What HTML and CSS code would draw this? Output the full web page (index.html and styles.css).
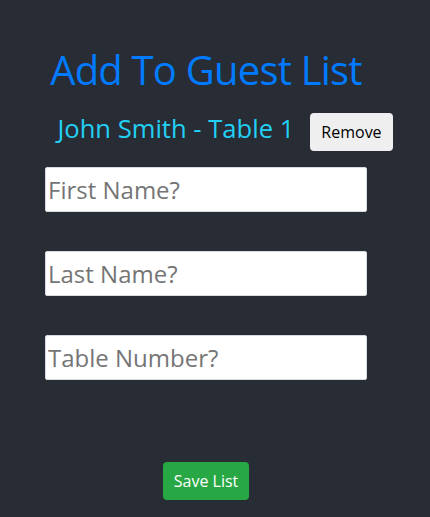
FILE: index.html
```html
<!DOCTYPE html>
<html lang="en">
<head>
<meta charset="utf-8">
<title>Add To Guest List</title>
<link rel="stylesheet" href="styles.css">
</head>
<body>
<div class="app">
  <h1 class="title">Add To Guest List</h1>
  <div class="guest-row">
    <span class="guest-name">John Smith - Table 1</span>
    <button class="btn btn-light" type="button">Remove</button>
  </div>
  <form class="guest-form">
    <input class="field" type="text" placeholder="First Name?">
    <input class="field" type="text" placeholder="Last Name?">
    <input class="field" type="text" placeholder="Table Number?">
  </form>
  <div class="actions">
    <button class="btn btn-success" type="button">Save List</button>
  </div>
</div>
</body>
</html>
```

FILE: styles.css
```css
html, body {
  margin: 0;
  padding: 0;
  background: #282c34;
  height: 100%;
}
body {
  font-family: "Open Sans", "Noto Sans", sans-serif;
  overflow: hidden;
}
.app {
  width: 412px;
  display: flex;
  flex-direction: column;
  align-items: center;
}
.title {
  margin: 46px 0 0;
  font-size: 40px;
  font-weight: 400;
  line-height: 1.2;
  letter-spacing: -0.8px;
  color: #007bff;
}
.guest-row {
  display: flex;
  align-items: baseline;
  gap: 16px;
  margin-top: 17px;
  padding-left: 38px;
}
.guest-name {
  font-size: 25.6px;
  color: #22d0f5;
}
.btn {
  font-family: inherit;
  font-size: 16px;
  line-height: 1.5;
  padding: 6px 10px;
  border: 1px solid transparent;
  border-radius: 4px;
  cursor: pointer;
}
.btn-light {
  background: #efefef;
  color: #000;
}
.btn-success {
  background: #28a745;
  color: #fff;
}
.guest-form {
  display: flex;
  flex-direction: column;
  gap: 39px;
  margin-top: 16px;
}
.field {
  box-sizing: border-box;
  width: 322px;
  height: 45px;
  margin: 0;
  padding: 0 2px;
  font-family: inherit;
  font-size: 24px;
  border: 1px solid #d6dbe0;
  border-radius: 2px;
  background: #fff;
  color: #222;
}
.field::placeholder {
  color: #757575;
}
.actions {
  margin-top: 82px;
}
```
